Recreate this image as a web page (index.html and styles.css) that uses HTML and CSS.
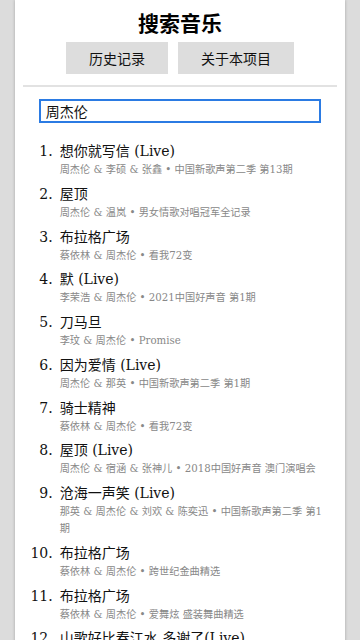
FILE: index.html
```html
<!DOCTYPE html>
<html lang="zh-CN">
<head>
<meta charset="utf-8">
<meta name="viewport" content="width=device-width, initial-scale=1">
<title>搜索音乐</title>
<link rel="stylesheet" href="styles.css">
</head>
<body>
<div class="page">
  <h1 class="title">搜索音乐</h1>
  <div class="actions">
    <button class="btn">历史记录</button>
    <button class="btn">关于本项目</button>
  </div>
  <hr class="divider">
  <div class="search">
    <input class="search-input" type="text" value="周杰伦" autofocus>
  </div>
  <ol class="results">
    <li class="song"><div class="song-name">想你就写信 (Live)</div><div class="song-meta">周杰伦 &amp; 李硕 &amp; 张鑫 • 中国新歌声第二季 第13期</div></li>
    <li class="song"><div class="song-name">屋顶</div><div class="song-meta">周杰伦 &amp; 温岚 • 男女情歌对唱冠军全记录</div></li>
    <li class="song"><div class="song-name">布拉格广场</div><div class="song-meta">蔡依林 &amp; 周杰伦 • 看我72变</div></li>
    <li class="song"><div class="song-name">默 (Live)</div><div class="song-meta">李荣浩 &amp; 周杰伦 • 2021中国好声音 第1期</div></li>
    <li class="song"><div class="song-name">刀马旦</div><div class="song-meta">李玟 &amp; 周杰伦 • Promise</div></li>
    <li class="song"><div class="song-name">因为爱情 (Live)</div><div class="song-meta">周杰伦 &amp; 那英 • 中国新歌声第二季 第1期</div></li>
    <li class="song"><div class="song-name">骑士精神</div><div class="song-meta">蔡依林 &amp; 周杰伦 • 看我72变</div></li>
    <li class="song"><div class="song-name">屋顶 (Live)</div><div class="song-meta">周杰伦 &amp; 宿涵 &amp; 张神儿 • 2018中国好声音 澳门演唱会</div></li>
    <li class="song"><div class="song-name">沧海一声笑 (Live)</div><div class="song-meta">那英 &amp; 周杰伦 &amp; 刘欢 &amp; 陈奕迅 • 中国新歌声第二季 第1期</div></li>
    <li class="song"><div class="song-name">布拉格广场</div><div class="song-meta">蔡依林 &amp; 周杰伦 • 跨世纪金曲精选</div></li>
    <li class="song"><div class="song-name">布拉格广场</div><div class="song-meta">蔡依林 &amp; 周杰伦 • 爱舞炫 盛装舞曲精选</div></li>
    <li class="song"><div class="song-name">山歌好比春江水 多谢了(Live)</div><div class="song-meta">刘三姐 &amp; 周杰伦 • 中国新歌声第二季 第13期</div></li>
  </ol>
</div>
</body>
</html>
```

FILE: styles.css
```css
html, body {
  margin: 0;
  padding: 0;
}
body {
  background: #dcdcdc;
  font-family: "DejaVu Serif", "Noto Sans CJK SC", serif;
  color: #111;
}
.page {
  width: 330px;
  margin: 0 auto;
  min-height: 100vh;
  background: #fff;
  box-shadow: 0 0 3px rgba(0, 0, 0, 0.25);
  padding: 8px 8px 0;
  box-sizing: border-box;
}
.title {
  margin: 0;
  font-family: "Noto Sans CJK SC", sans-serif;
  font-size: 21px;
  line-height: 28px;
  font-weight: 700;
  text-align: center;
  color: #000;
}
.actions {
  display: flex;
  justify-content: center;
  gap: 10px;
  margin-top: 6px;
}
.btn {
  height: 32px;
  padding: 0 23px;
  border: none;
  border-radius: 0;
  background: #dddddd;
  font-family: "Noto Sans CJK SC", sans-serif;
  font-size: 14px;
  color: #111;
}
.divider {
  border: none;
  border-top: 2px solid #e2e2e2;
  margin: 11px 0 0;
  height: 0;
}
.search {
  display: flex;
  justify-content: center;
  margin-top: 12px;
}
.search-input {
  width: 90%;
  height: 24px;
  box-sizing: border-box;
  border: 2px solid #2b7be3;
  outline: none;
  padding: 0 5px;
  font-family: "Noto Sans CJK SC", sans-serif;
  font-size: 14px;
  color: #111;
}
.results {
  margin: 18px 8px 0 5%;
  padding: 0 0 0 21px;
  font-size: 14px;
}
.song {
  margin-bottom: 5.75px;
}
.song::marker {
  content: counter(list-item) ".\2002";
  font-family: "DejaVu Serif", serif;
  font-size: 14px;
  color: #111;
}
.song-name {
  font-size: 14px;
  line-height: 20px;
  color: #111;
}
.song-meta {
  font-size: 10.2px;
  line-height: 17px;
  color: #888;
}
```
